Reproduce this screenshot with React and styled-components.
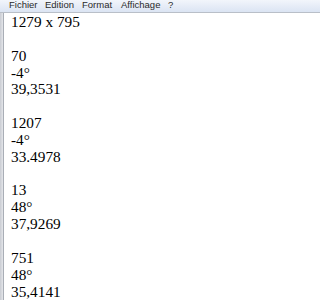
import React from 'react';
import styled, {createGlobalStyle} from 'styled-components';

const Global = createGlobalStyle`
	html, body {
		margin: 0;
		padding: 0;
		background: #ffffff;
	}
`;

const Window = styled.div`
	width: 320px;
	height: 300px;
	overflow: hidden;
	display: flex;
	flex-direction: column;
`;

const MenuBar = styled.div`
	height: 12px;
	flex-shrink: 0;
	display: flex;
	align-items: flex-end;
	padding-left: 9px;
	background: linear-gradient(#f2f5fb, #dbe4f3);
	border-bottom: 1px solid #b9bfc8;
	font-family: "Liberation Sans", Arial, sans-serif;
	font-size: 9.5px;
	line-height: 12px;
	color: #2a2a2a;
	overflow: hidden;
`;

const MenuItem = styled.span`
	width: ${p => p.w}px;
	flex-shrink: 0;
	transform: translateY(-1px);
`;

const Body = styled.div`
	flex: 1;
	display: flex;
`;

const Edge = styled.div`
	width: 3px;
	background: linear-gradient(90deg, #c9ccd2, #e4e6ea);
	border-right: 1px solid #a9aeb6;
`;

const Text = styled.pre`
	margin: 0;
	padding: 1px 0 0 7px;
	font-family: "Liberation Serif", serif;
	font-size: 15.3px;
	line-height: 16.85px;
	color: #000;
	white-space: pre;
`;

const menus = [
	{label: 'Fichier', w: 36},
	{label: 'Edition', w: 37},
	{label: 'Format', w: 39},
	{label: 'Affichage', w: 47},
	{label: '?', w: 10},
];

const content = `1279 x 795

70
-4°
39,3531

1207
-4°
33.4978

13
48°
37,9269

751
48°
35,4141`;

export default function App() {
	return (
		<Window>
			<Global />
			<MenuBar>
				{menus.map(m => <MenuItem key={m.label} w={m.w}>{m.label}</MenuItem>)}
			</MenuBar>
			<Body>
				<Edge />
				<Text>{content}</Text>
			</Body>
		</Window>
	);
}
